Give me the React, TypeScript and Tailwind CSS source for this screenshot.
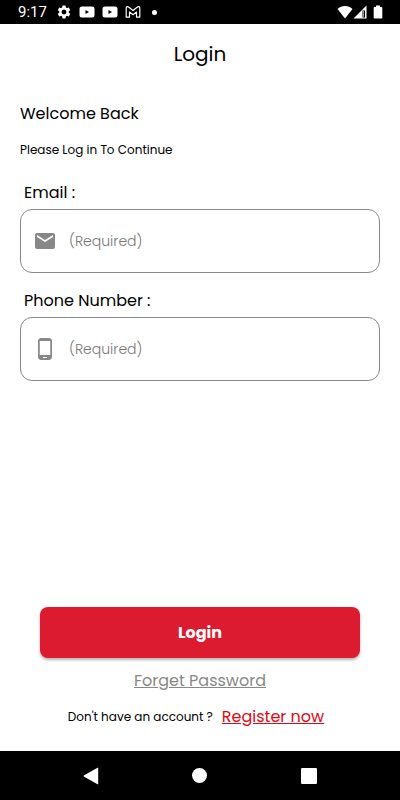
import { useState } from 'react';
import type { FormEvent } from 'react';
import type { IconType } from 'react-icons';
import { MdEmail, MdPhoneAndroid, MdSettings } from 'react-icons/md';

interface FieldProps {
  id: string;
  label: string;
  type: string;
  icon: IconType;
  value: string;
  onChange: (value: string) => void;
}

function YoutubeIcon() {
  return (
    <svg viewBox="0 0 16 12" className="w-4 h-3" fill="currentColor">
      <path fillRule="evenodd" d="M3 .5h10A2.500 2.500 0 0 1 15.500 3v6a2.500 2.500 0 0 1-2.500 2.500H3A2.500 2.500 0 0 1 .5 9V3A2.500 2.500 0 0 1 3 .5zM6.500 4v4l3.500-2z" />
    </svg>
  );
}

function GmailIcon() {
  return (
    <svg viewBox="0 0 16 12" className="w-4 h-3" fill="none" stroke="currentColor">
      <path
        d="M1.200 11.200V2c0-1.400 1.400-1.800 2.300-1L8 4.500 12.500 1c.9-.8 2.300-.4 2.300 1v9.200h-3.300V6L8 8.700 4.500 6v5.200z"
        strokeWidth="1.200"
        strokeLinejoin="round"
      />
    </svg>
  );
}

function StatusBar() {
  return (
    <header className="flex h-6 items-center justify-between bg-black pl-[18px] pr-[17px] text-white">
      <div className="flex items-center">
        <span className="w-[38px] font-[Roboto,sans-serif] text-[15px] leading-6">9:17</span>
        <div className="flex items-center gap-[7px]">
          <MdSettings className="size-4" />
          <YoutubeIcon />
          <YoutubeIcon />
          <GmailIcon />
          <span className="ml-1 size-[5px] rounded-full bg-white" />
        </div>
      </div>
      <div className="flex items-center">
        <svg viewBox="0 0 16 14" className="h-[14px] w-4" fill="currentColor">
          <path d="M8 13.500.5 4C4.500 0 11.500 0 15.500 4z" />
        </svg>
        <svg viewBox="0 0 14 14" className="h-[14px] w-[14px]">
          <path d="M13.500.5v13H.5z" fill="currentColor" />
          <path d="M9.500 5.500H12v7H9.500z" fill="#000" />
          <path d="M10.500 6v6" stroke="#999" />
        </svg>
        <svg viewBox="0 0 10 14" className="ml-[6px] h-[14px] w-[10px]" fill="currentColor">
          <path d="M3 .5h4V2h1.500q.8 0 .8.800v10q0 .8-.8.800h-7q-.8 0-.8-.8v-10Q.7 2 1.500 2H3z" />
        </svg>
      </div>
    </header>
  );
}

function Field({ id, label, type, icon: Icon, value, onChange }: FieldProps) {
  return (
    <div>
      <label htmlFor={id} className="block pl-1 text-base leading-6">
        {label}
      </label>
      <div className="mt-1 flex h-16 items-center gap-3 rounded-xl border border-[#888] px-3 focus-within:border-black">
        <Icon className="size-6 shrink-0 text-[#888]" />
        <input
          id={id}
          type={type}
          value={value}
          onChange={(e) => onChange(e.target.value)}
          placeholder="(Required)"
          className="h-full min-w-0 flex-1 bg-transparent text-sm font-light outline-none placeholder:text-[#777]"
        />
      </div>
    </div>
  );
}

function NavigationBar() {
  return (
    <nav className="flex h-[49px] items-center justify-around bg-black px-9 text-white">
      <button type="button" aria-label="Back">
        <svg viewBox="0 0 16 18" className="h-[18px] w-4" fill="currentColor">
          <path d="M14.500.8q.7-.4.700.4v15.600q0 .8-.7.400L.8 9.500Q.2 9 .8 8.500z" />
        </svg>
      </button>
      <button type="button" aria-label="Home">
        <span className="block size-[15px] rounded-full bg-white" />
      </button>
      <button type="button" aria-label="Recent apps">
        <span className="block size-4 rounded-[1px] bg-white" />
      </button>
    </nav>
  );
}

export default function App() {
  const [email, setEmail] = useState<string>('');
  const [phone, setPhone] = useState<string>('');

  const handleSubmit = (e: FormEvent) => {
    e.preventDefault();
  };

  return (
    <div className="flex min-h-screen flex-col bg-white font-[Poppins,Inter,sans-serif] text-black">
      <StatusBar />

      <main className="flex flex-1 flex-col px-5">
        <h1 className="pt-[14px] text-center text-xl leading-8">Login</h1>

        <h2 className="mt-8 text-base leading-6">Welcome Back</h2>
        <p className="mt-3 text-xs leading-6">Please Log in To Continue</p>

        <form onSubmit={handleSubmit} className="mt-[19px] flex flex-1 flex-col">
          <div className="flex flex-col gap-4">
            <Field id="email" label="Email :" type="email" icon={MdEmail} value={email} onChange={setEmail} />
            <Field
              id="phone"
              label="Phone Number :"
              type="tel"
              icon={MdPhoneAndroid}
              value={phone}
              onChange={setPhone}
            />
          </div>

          <button
            type="submit"
            className="mx-5 mt-auto h-[51px] rounded-lg bg-[#dc1a30] text-base font-bold text-white shadow-[0_2px_3px_rgba(0,0,0,0.3)]">
            Login
          </button>
        </form>

        <div className="mt-[11px] flex flex-col items-center gap-3 pb-[22px]">
          <a href="#forget" className="text-base leading-6 text-[#888] underline">
            Forget Password
          </a>
          <p className="flex items-center gap-[9px] pr-2 text-xs leading-6">
            Don't have an account ?
            <a href="#register" className="text-base text-[#dc0a14] underline">
              Register now
            </a>
          </p>
        </div>
      </main>

      <NavigationBar />
    </div>
  );
}
